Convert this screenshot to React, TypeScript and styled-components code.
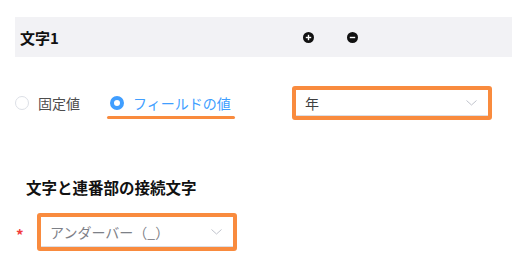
import React from 'react';
import styled, { createGlobalStyle } from 'styled-components';

const GlobalStyle = createGlobalStyle`
  body {
    margin: 0;
    background: #fff;
    font-family: "Noto Sans CJK JP", "Noto Sans", sans-serif;
  }
`;

const Page = styled.div`
  width: 512px;
  height: 274px;
  padding-top: 17px;
  box-sizing: border-box;
  overflow: hidden;
`;

const Header = styled.div`
  display: flex;
  align-items: center;
  margin-left: 15px;
  height: 40px;
  padding-left: 5px;
  background: #f2f2f5;
`;

const HeaderTitle = styled.div`
  width: 283px;
  font-size: 15px;
  font-weight: 700;
  color: #111;
`;

const IconGroup = styled.div`
  display: flex;
  align-items: center;
  gap: 33px;
`;

const RadioRow = styled.div`
  display: flex;
  align-items: center;
  margin-top: 29px;
  height: 34px;
  padding-left: 15px;
`;

const RadioGroup = styled.div`
  display: flex;
  align-items: center;
  width: 277px;
  gap: 30px;
`;

const RadioOption = styled.label<{ $marked?: boolean }>`
  position: relative;
  display: flex;
  align-items: center;
  gap: 9px;
  font-size: 14px;
  color: ${(p) => (p.$marked ? '#409eff' : '#4d4d4d')};
  &::after {
    content: '';
    display: ${(p) => (p.$marked ? 'block' : 'none')};
    position: absolute;
    left: -3px;
    right: -4px;
    bottom: -6px;
    height: 3px;
    border-radius: 2px;
    background: #f98b3e;
  }
`;

const RadioDot = styled.span<{ $checked?: boolean }>`
  width: 14px;
  height: 14px;
  box-sizing: border-box;
  border-radius: 50%;
  border: ${(p) => (p.$checked ? '4px solid #409eff' : '1px solid #dcdfe6')};
  background: #fff;
`;

const Highlight = styled.div<{ $height: number }>`
  width: 200px;
  height: ${(p) => p.$height}px;
  box-sizing: border-box;
  border: 4px solid #f98b3e;
  border-radius: 3px;
  display: flex;
`;

const SelectBox = styled.div<{ $muted?: boolean }>`
  flex: 1;
  display: flex;
  align-items: center;
  justify-content: space-between;
  padding: 0 11px 0 9px;
  border-bottom: 1px solid #dcdfe6;
  font-size: 14px;
  color: ${(p) => (p.$muted ? '#7d8087' : '#3f3f3f')};
`;

const SectionTitle = styled.div`
  margin-top: 56px;
  padding-left: 26px;
  font-size: 15.5px;
  font-weight: 700;
  color: #111;
`;

const FieldRow = styled.div`
  display: flex;
  align-items: center;
  margin-top: 15px;
  padding-left: 16px;
`;

const Required = styled.span`
  width: 21px;
  color: #f23c3c;
  font-size: 15px;
  font-weight: 700;
  padding-top: 4px;
`;

const CircleIcon = ({ plus }: { plus?: boolean }) => (
  <svg width="11" height="11" viewBox="0 0 11 11">
    <circle cx="5.5" cy="5.5" r="5.5" fill="#111" />
    <rect x="2.8" y="4.8" width="5.4" height="1.4" fill="#fff" />
    {plus && <rect x="4.8" y="2.8" width="1.4" height="5.4" fill="#fff" />}
  </svg>
);

const Chevron = () => (
  <svg width="11" height="6" viewBox="0 0 11 6">
    <path d="M0.5 0.5 L5.5 5 L10.5 0.5" fill="none" stroke="#c0c4cc" strokeWidth="1" />
  </svg>
);

const App = (): React.ReactElement => {
  return (
    <Page>
      <GlobalStyle />
      <Header>
        <HeaderTitle>文字1</HeaderTitle>
        <IconGroup>
          <CircleIcon plus />
          <CircleIcon />
        </IconGroup>
      </Header>
      <RadioRow>
        <RadioGroup>
          <RadioOption>
            <RadioDot />
            固定値
          </RadioOption>
          <RadioOption $marked>
            <RadioDot $checked />
            フィールドの値
          </RadioOption>
        </RadioGroup>
        <Highlight $height={34}>
          <SelectBox>
            年
            <Chevron />
          </SelectBox>
        </Highlight>
      </RadioRow>
      <SectionTitle>文字と連番部の接続文字</SectionTitle>
      <FieldRow>
        <Required>*</Required>
        <Highlight $height={38}>
          <SelectBox $muted>
            アンダーバー（_）
            <Chevron />
          </SelectBox>
        </Highlight>
      </FieldRow>
    </Page>
  );
};

export default App;
